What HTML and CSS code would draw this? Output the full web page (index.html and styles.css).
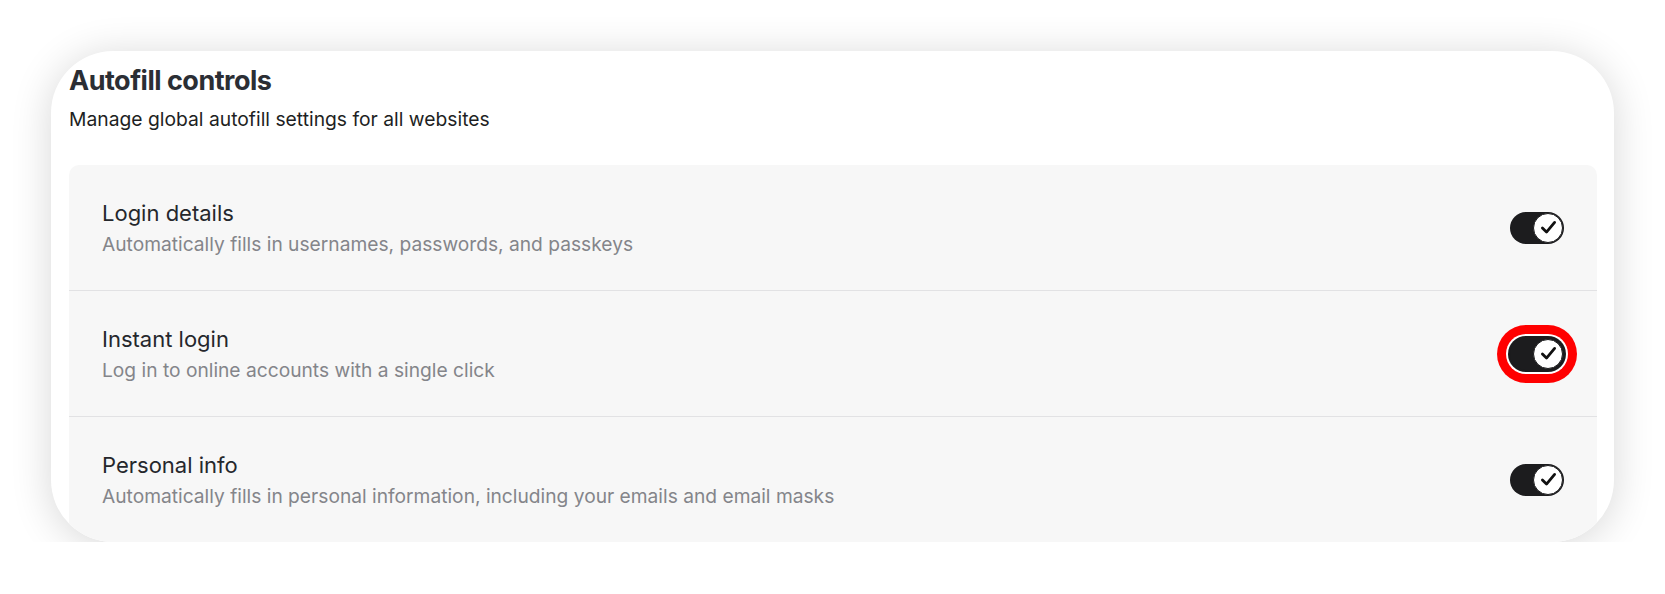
FILE: index.html
```html
<!DOCTYPE html>
<html lang="en">
<head>
<meta charset="utf-8">
<title>Autofill controls</title>
<link rel="stylesheet" href="styles.css">
</head>
<body>
<div class="page">
  <section class="card">
    <h1 class="title">Autofill controls</h1>
    <p class="subtitle">Manage global autofill settings for all websites</p>
    <div class="panel">
      <div class="row">
        <div class="text">
          <div class="row-title">Login details</div>
          <div class="row-desc">Automatically fills in usernames, passwords, and passkeys</div>
        </div>
        <div class="toggle" role="switch" aria-checked="true">
          <span class="knob"><svg viewBox="0 0 27 27"><polyline points="7.4,14 11.5,18.1 19.6,8.4" fill="none" stroke="#111" stroke-width="2.8" stroke-linecap="round" stroke-linejoin="round"/></svg></span>
        </div>
      </div>
      <div class="row">
        <div class="text">
          <div class="row-title">Instant login</div>
          <div class="row-desc">Log in to online accounts with a single click</div>
        </div>
        <div class="toggle focused" role="switch" aria-checked="true">
          <span class="knob"><svg viewBox="0 0 27 27"><polyline points="7.4,14 11.5,18.1 19.6,8.4" fill="none" stroke="#111" stroke-width="2.8" stroke-linecap="round" stroke-linejoin="round"/></svg></span>
        </div>
      </div>
      <div class="row">
        <div class="text">
          <div class="row-title">Personal info</div>
          <div class="row-desc">Automatically fills in personal information, including your emails and email masks</div>
        </div>
        <div class="toggle" role="switch" aria-checked="true">
          <span class="knob"><svg viewBox="0 0 27 27"><polyline points="7.4,14 11.5,18.1 19.6,8.4" fill="none" stroke="#111" stroke-width="2.8" stroke-linecap="round" stroke-linejoin="round"/></svg></span>
        </div>
      </div>
    </div>
  </section>
</div>
</body>
</html>
```

FILE: styles.css
```css
* { box-sizing: border-box; }
html, body { margin: 0; padding: 0; background: #ffffff; }
body {
  font-family: Inter, "Noto Sans", "Liberation Sans", sans-serif;
  -webkit-font-smoothing: antialiased;
}
.page {
  padding: 51px 51px 0 51px;
}
.card {
  background: #ffffff;
  border-radius: 62px;
  overflow: hidden;
  box-shadow: 0 4px 40px rgba(0, 0, 0, 0.16);
  padding: 14px 17px 0 18px;
  height: 491px;
}
.title {
  margin: 0;
  font-size: 27px;
  line-height: 32px;
  font-weight: 700;
  letter-spacing: -0.5px;
  color: #2b2e34;
}
.subtitle {
  margin: 10px 0 0 0;
  font-size: 19.3px;
  line-height: 24px;
  color: #1e1f23;
}
.panel {
  margin-top: 34px;
  background: #f7f7f7;
  border-radius: 10px 10px 0 0;
}
.row {
  display: flex;
  align-items: center;
  justify-content: space-between;
  height: 126px;
  padding: 0 33px;
  border-bottom: 1px solid #e2e2e4;
}
.row:last-child { border-bottom: none; height: 125px; }
.text { display: flex; flex-direction: column; }
.row-title {
  font-size: 22px;
  line-height: 28px;
  color: #25272c;
}
.row-desc {
  margin-top: 5px;
  font-size: 19.2px;
  line-height: 24px;
  color: #84858a;
}
.toggle {
  width: 54px;
  height: 32px;
  border-radius: 16px;
  background: #1c1c1e;
  display: flex;
  align-items: center;
  justify-content: flex-end;
  padding: 1px;
  flex: none;
}
.toggle.focused {
  box-shadow: 0 0 0 2px #1c1c1e, 0 0 0 4px #ffffff, 0 0 0 13px #ff0000;
}
.knob {
  width: 30px;
  height: 30px;
  border-radius: 50%;
  background: #ffffff;
  border: 1.5px solid #1c1c1e;
  display: flex;
  align-items: center;
  justify-content: center;
}
.knob svg { display: block; width: 27px; height: 27px; }
```
